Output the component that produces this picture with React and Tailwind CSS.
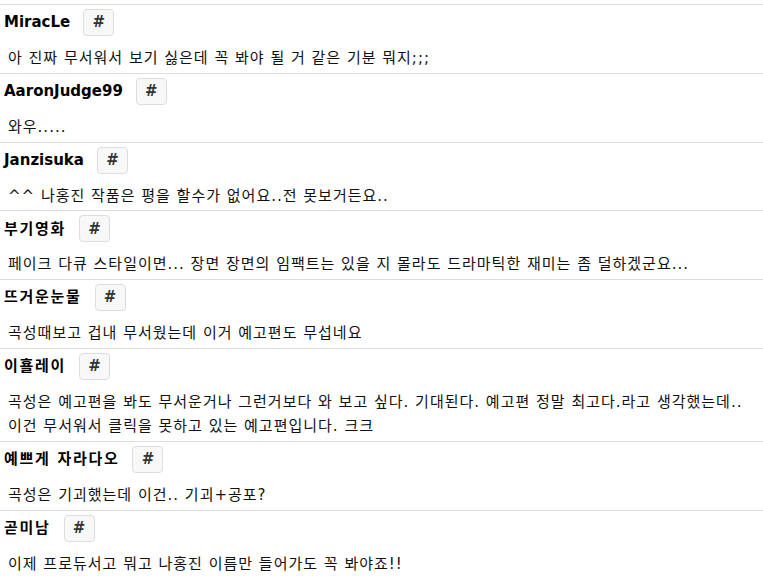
const comments = [
  { name: "MiracLe", text: ["아 진짜 무서워서 보기 싫은데 꼭 봐야 될 거 같은 기분 뭐지;;;"] },
  { name: "AaronJudge99", text: ["와우....."] },
  { name: "Janzisuka", text: ["^^ 나홍진 작품은 평을 할수가 없어요..전 못보거든요.."] },
  { name: "부기영화", ko: true, text: ["페이크 다큐 스타일이면... 장면 장면의 임팩트는 있을 지 몰라도 드라마틱한 재미는 좀 덜하겠군요..."] },
  { name: "뜨거운눈물", ko: true, text: ["곡성때보고 겁내 무서웠는데 이거 예고편도 무섭네요"] },
  {
    name: "이횰레이",
    ko: true,
    text: [
      "곡성은 예고편을 봐도 무서운거나 그런거보다 와 보고 싶다. 기대된다. 예고편 정말 최고다.라고 생각했는데..",
      "이건 무서워서 클릭을 못하고 있는 예고편입니다. 크크",
    ],
  },
  { name: "예쁘게 자라다오", ko: true, text: ["곡성은 기괴했는데 이건.. 기괴+공포?"] },
  { name: "곧미남", ko: true, text: ["이제 프로듀서고 뭐고 나홍진 이름만 들어가도 꼭 봐야죠!!"] },
]

const Comment = ({ name, ko, text }) => (
  <li className="border-t border-[#dddddd] pt-1 pb-[2.6px]">
    <div className="flex items-center h-[27px] pl-1">
      <span className={ko ? "font-bold text-[15px] text-black tracking-[1.7px]" : "font-bold text-[15px] text-black"}>
        {name}
      </span>
      <button className="ml-[13px] w-[31px] h-[27px] rounded-[4px] border border-[#dddddd] bg-[#f8f8f8] text-[15px] font-bold text-[#333] flex items-center justify-center">
        #
      </button>
    </div>
    <div className="mt-[10px] pl-2 text-[15px] leading-[24.2px] tracking-[1px] text-[#111]">
      {text.map((line, i) => (
        <p key={i}>{line}</p>
      ))}
    </div>
  </li>
)

export default function App() {
  return (
    <div
      className="w-[763px] h-[580px] overflow-hidden bg-white pt-1"
      style={{ fontFamily: '"DejaVu Sans", "Noto Sans CJK KR", sans-serif' }}
    >
      <ul>
        {comments.map((c) => (
          <Comment key={c.name} {...c} />
        ))}
      </ul>
    </div>
  )
}
